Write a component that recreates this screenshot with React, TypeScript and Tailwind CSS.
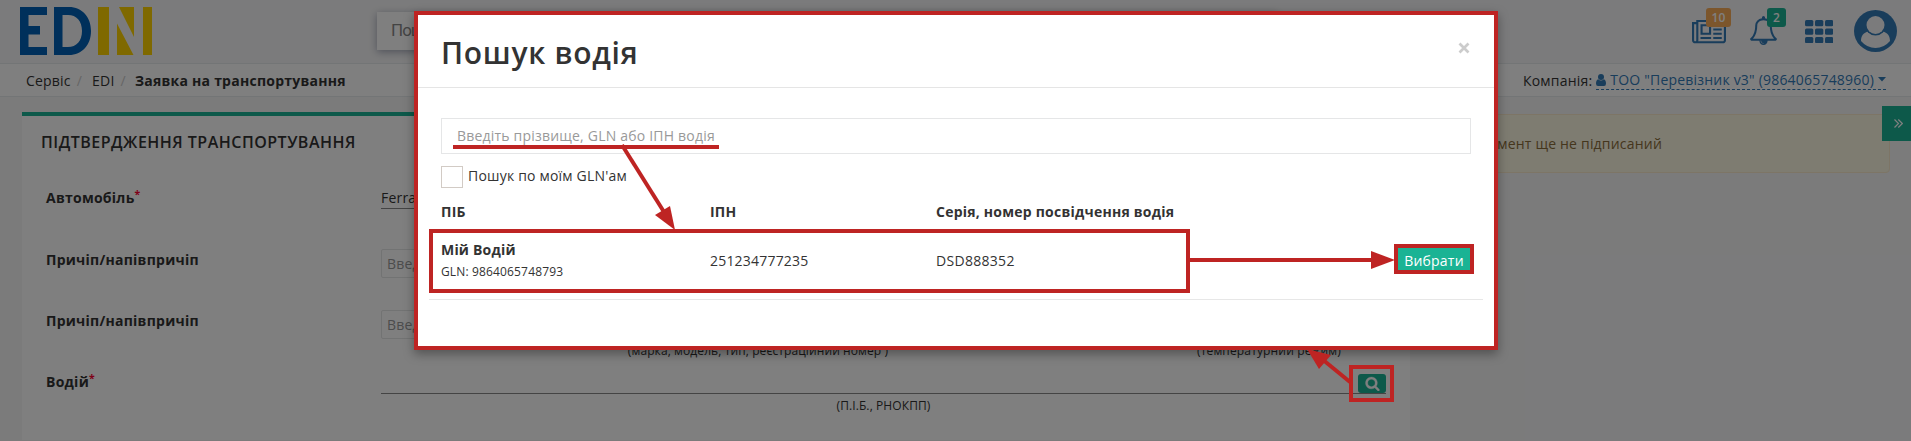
import React from "react";

const RED = "#be2423";

function Label({ children, req, className }: { children: React.ReactNode; req?: boolean; className?: string }) {
  return (
    <div className={`w-[335px] shrink-0 pt-px font-bold leading-5 tracking-[0.25px] ${className ?? ""}`}>
      {children}
      {req && <sup className="relative -top-[5px] align-baseline text-[10.5px] leading-none text-[#ff0033]">*</sup>}
    </div>
  );
}

function Logo() {
  return (
    <svg width="132" height="48" viewBox="0 0 132 48" className="block">
      <path fill="#0060b6" d="M0 0H27V8H8.500V19H20V27.500H8.500V40H27V48H0Z" />
      <path fill="#0060b6" fillRule="evenodd" d="M34 0H49C62 0 71 10 71 24S62 48 49 48H34ZM42.500 8V40H48C56.500 40 62 34 62 24S56.500 8 48 8Z" />
      <path fill="#ffd200" d="M78 0H89V48H78ZM99 0H114V30ZM97 16.500L113.500 48H97ZM123 0H132V48H123Z" />
    </svg>
  );
}

function Header() {
  return (
    <header className="flex h-16 border-b border-[#e7eaec] bg-[#f7f7f8]">
      <div className="ml-5 mt-[7px] w-[357px]"><Logo /></div>
      <div className="mt-3 flex h-[38px] w-[900px] items-center bg-white pl-[14px] font-['Roboto',sans-serif] text-[17px] tracking-[-1px] text-[#888] shadow-[0_2px_8px_#a0a4b4]">Пошук</div>
      <div className="ml-auto flex text-[#337ab7]">
        <div className="relative mt-[14px] mr-[23px]">
          <svg width="34" height="34" viewBox="0 0 2048 2048" fill="currentColor"><path transform="translate(0 230)" d="M1024 512h-384v384h384v-384zM1152 1152v128h-640v-128h640zM1152 384v640h-640v-640h640zM1792 1152v128h-512v-128h512zM1792 896v128h-512v-128h512zM1792 640v128h-512v-128h512zM1792 384v128h-512v-128h512zM256 1344v-960h-128v960q0 26 19 45t45 19 45-19 19-45zM1920 1344v-1088h-1536v1088q0 33-11 64h1483q26 0 45-19t19-45zM2048 128v1216q0 80-56 136t-136 56h-1664q-80 0-136-56t-56-136v-1088h256v-128h1792z" /></svg>
          <span className="absolute left-[14px] -top-[6px] flex h-[19px] w-[25px] items-center justify-center rounded-[3px] bg-[#f8ac59] text-[12px] font-semibold text-white">10</span>
        </div>
        <div className="relative mt-4 mr-[27px]">
          <svg width="29" height="29" viewBox="0 0 1792 1792" fill="currentColor"><path d="M912 1696q0-16-16-16-59 0-101.500-42.500t-42.500-101.500q0-16-16-16t-16 16q0 73 51.500 124.500t124.500 51.500q16 0 16-16zM246 1408h1300q-266-300-266-832 0-51-24-105t-69-103-121.500-80.500-169.500-31.500-169.500 31.500-121.500 80.500-69 103-24 105q0 532-266 832zM1728 1408q0 52-38 90t-90 38h-448q0 106-75 181t-181 75-181-75-75-181h-448q-52 0-90-38t-38-90q50-42 91-88t85-119.500 74.500-158.500 50-206 19.500-260q0-152 117-282.500t307-158.500q-8-19-8-39 0-40 28-68t68-28 68 28 28 68q0 20-8 39 190 28 307 158.500t117 282.500q0 139 19.500 260t50 206 74.500 158.500 85 119.500 91 88z" /></svg>
          <span className="absolute left-[18px] -top-2 flex h-[19px] w-[19px] items-center justify-center rounded-[3px] bg-[#1ab394] text-[12px] font-semibold text-white">2</span>
        </div>
        <svg className="mt-5 mr-[21px]" width="28" height="23" fill="currentColor">
          {[0, 8.5, 17].map((y) => [0, 10, 20].map((x) => <rect key={`${x}-${y}`} x={x} y={y} width="8.300" height="6.200" rx="1.500" />))}
        </svg>
        <svg className="mt-[10px] mr-[14px]" width="43" height="42" viewBox="0 0 43 42">
          <ellipse cx="21.500" cy="21" rx="21.500" ry="21" fill="currentColor" />
          <path d="M7 31C7 25.500 10 22.500 14 21.500Q21.500 28.500 29 21.500C33 22.500 36 25.500 36 31Q30 38 21.500 38T7 31Z" fill="#f7f7f8" />
          <circle cx="21.500" cy="15" r="10.500" fill="currentColor" />
          <circle cx="21.500" cy="15" r="9" fill="#f7f7f8" />
        </svg>
      </div>
    </header>
  );
}

function Breadcrumbs() {
  return (
    <nav className="flex h-[33px] items-center border-b border-[#e7eaec] bg-white pl-[26px] pr-[25px]">
      <span>Сервіс</span>
      <span className="ml-[6px] text-[#ccc]">/</span>
      <span className="ml-[10px]">EDI</span>
      <span className="ml-[6px] text-[#ccc]">/</span>
      <b className="ml-[9px] tracking-[0.25px]">Заявка на транспортування</b>
      <span className="ml-auto mr-1">Компанія:</span>
      <span className="flex items-center border-b border-dashed border-[#337ab7] leading-[18px] text-[#337ab7]">
        <svg className="mr-1" width="10" height="12" viewBox="0 0 10 12" fill="currentColor"><circle cx="5" cy="3" r="3" /><path d="M2.200 5.200Q5 7.600 7.800 5.200Q10 6 10 9.500Q10 12 8 12H2Q0 12 0 9.500Q0 6 2.200 5.200Z" /></svg>
        ТОО "Перевізник v3" (9864065748960)
        <svg className="ml-1" width="8" height="5" fill="currentColor"><path d="M0 0H8L4 4.500Z" /></svg>
      </span>
    </nav>
  );
}

function Form() {
  return (
    <section className="h-[328px] w-[1388px] border-t-4 border-[#1ab394] bg-white">
      <h2 className="ml-[19px] mt-[14px] text-[16px] font-semibold leading-6 tracking-[0.49px]">ПІДТВЕРДЖЕННЯ ТРАНСПОРТУВАННЯ</h2>
      <div className="ml-6 mt-[34px] flex h-[61px]">
        <Label req className="-mt-px">Автомобіль</Label>
        <div className="h-[21px] w-[1005px] border-b border-[#888] leading-5">Ferrari</div>
      </div>
      <div className="ml-6 flex h-[61px]">
        <Label>Причіп/напівпричіп</Label>
        <div className="h-[29px] w-[500px] rounded-[2px] border border-[#e5e6e7] pl-[5px] leading-[27px] text-[#999]">Введіть</div>
      </div>
      <div className="ml-6 flex h-[61px]">
        <Label>Причіп/напівпричіп</Label>
        <div className="w-[754px]">
          <div className="h-[29px] w-[754px] rounded-[2px] border border-[#e5e6e7] pl-[5px] leading-[27px] text-[#999]">Введіть</div>
          <div className="text-center text-[12px] leading-[23px] tracking-[0.1px]">(марка, модель, тип, реєстраційний номер )</div>
        </div>
        <div className="w-[268px] pt-[29px] text-center text-[12px] leading-[23px] tracking-[0.15px]">(температурний режим)</div>
      </div>
      <div className="ml-6 flex">
        <Label req>Водій</Label>
        <div className="w-[1005px]">
          <div className="flex h-[23px] justify-end border-b border-[#888]">
            <div className="mt-[3px] flex h-[19px] w-7 items-center justify-center rounded-[3px] bg-[#1ab394] text-white">
              <svg width="15" height="15" viewBox="0 0 1792 1792" fill="currentColor" stroke="currentColor" strokeWidth="40"><path d="M1216 832q0-185-131.500-316.500t-316.500-131.500-316.500 131.500-131.500 316.500 131.500 316.500 316.500 131.500 316.500-131.500 131.500-316.500zM1728 1664q0 52-38 90t-90 38q-54 0-90-38l-343-342q-179 124-399 124-143 0-273.500-55.500t-225-150-150-225-55.500-273.500 55.500-273.500 150-225 225-150 273.500-55.500 273.500 55.500 225 150 150 225 55.500 273.500q0 220-124 399l343 343q37 37 37 90z" /></svg>
            </div>
          </div>
          <div className="text-center text-[12px] leading-[23px] tracking-[0.1px]">(П.І.Б., РНОКПП)</div>
        </div>
      </div>
    </section>
  );
}

function Modal() {
  return (
    <div className="absolute left-[414px] top-[11px] h-[339px] w-[1084px] border-4 border-[#be2423] bg-white shadow-[0_4px_10px_rgba(0,0,0,0.35)]">
      <div className="flex h-[73px] justify-between border-b border-[#e5e5e5] pl-[23px] pr-[24px]">
        <h1 className="mt-[18px] text-[30px] font-semibold leading-[40px] tracking-[0.7px]">Пошук водія</h1>
        <svg className="mt-[27px]" width="12" height="12" viewBox="0 0 12 12" stroke="#ccc" strokeWidth="2.700"><path d="M1.500 1.500L10.500 10.500M10.500 1.500L1.500 10.500" /></svg>
      </div>
      <div className="pl-[23px] pr-[23px] pt-[30px]">
        <div className="h-9 border border-[#e5e6e7] pl-[15px] leading-[34px] text-[#999]">Введіть прізвище, GLN або ІПН водія</div>
        <div className="mt-3 flex items-center">
          <span className="h-[22px] w-[22px] border border-[#d2cbc5]" />
          <span className="-mt-[2px] ml-[5px] leading-5">Пошук по моїм GLN'ам</span>
        </div>
        <div className="mt-[14px] flex font-bold leading-5 tracking-[0.23px]">
          <div className="w-[269px]">ПІБ</div>
          <div className="w-[226px]">ІПН</div>
          <div>Серія, номер посвідчення водія</div>
        </div>
      </div>
      <div className="mx-[11px] mt-[7px] flex h-[71px] border-b border-[#e7e7e7]">
        <div className="flex h-16 w-[761px] items-center border-4 border-[#be2423] pl-2">
          <div className="w-[269px]">
            <div className="font-bold leading-5">Мій Водій</div>
            <div className="text-[12px] leading-[23px] tracking-[0.15px]">GLN: 9864065748793</div>
          </div>
          <div className="-mt-px w-[226px]">251234777235</div>
          <div className="-mt-px tracking-[0.3px]">DSD888352</div>
        </div>
        <div className="ml-auto mr-[9px] mt-[15px] flex h-[30px] w-20 items-center justify-center border-4 border-[#be2423] bg-[#1ab394] pt-[2px] text-white">Вибрати</div>
      </div>
    </div>
  );
}

export default function App() {
  return (
    <div className="relative h-[441px] w-[1911px] overflow-hidden bg-[#f6f6f7] font-['Open_Sans',sans-serif] text-[14px] tracking-[0.2px] text-[#333]">
      <Header />
      <Breadcrumbs />
      <main className="flex pl-[22px] pt-[15px]">
        <Form />
        <aside className="ml-[15px] mt-[2px] flex h-[59px] w-[465px] items-center rounded border border-[#faebcc] bg-[#fcf8e3] pl-[15px] text-[#8a6d3b]">
          <span className="flex w-[221px] justify-end whitespace-nowrap">Документ ще не підписаний</span>
        </aside>
      </main>
      <div className="absolute right-0 top-[106px] flex h-[35px] w-[29px] items-center justify-center bg-[#1ab394] pl-1 text-white">
        <svg width="9" height="9" viewBox="0 0 9 9" fill="none" stroke="currentColor" strokeWidth="1.200"><path d="M.500.500L4.500 4.500L.500 8.500M4.300.500L8.300 4.500L4.300 8.500" /></svg>
      </div>
      <div className="absolute inset-0 bg-black/50" />
      <Modal />
      <div className="absolute left-[1349px] top-[365px] h-[37px] w-[45px] border-4 border-[#be2423]" />
      <svg className="absolute inset-0" width="1911" height="441" fill={RED} stroke="none">
        <rect x="453" y="145" width="266" height="4" />
        <path d="M622 145L664 212" stroke={RED} strokeWidth="4" />
        <path d="M655 215L670 206L675 230Z" />
        <path d="M1190 260H1372" stroke={RED} strokeWidth="4" />
        <path d="M1371 251V269L1395 260Z" />
        <path d="M1350 382L1322 359" stroke={RED} strokeWidth="4" />
        <path d="M1307 349L1331 355L1319 369Z" />
      </svg>
    </div>
  );
}
